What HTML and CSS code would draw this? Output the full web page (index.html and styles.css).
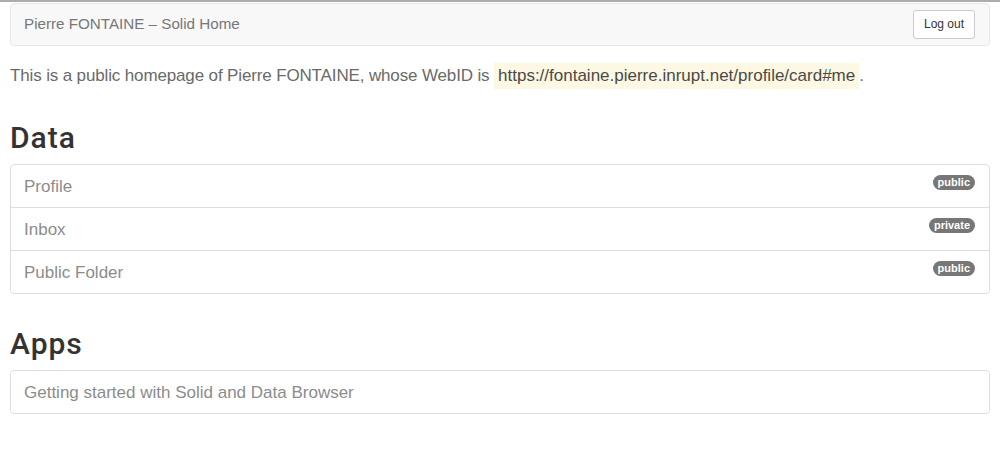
FILE: index.html
```html
<!DOCTYPE html>
<html>
<head>
<meta charset="utf-8">
<link rel="stylesheet" href="styles.css">
</head>
<body>
<div class="page">
  <nav class="navbar">
    <span class="brand">Pierre FONTAINE – Solid Home</span>
    <button class="btn">Log out</button>
  </nav>
  <p class="intro">This is a public homepage of Pierre FONTAINE, whose WebID is <span class="webid">https://fontaine.pierre.inrupt.net/profile/card#me</span>.</p>
  <h2 class="heading">Data</h2>
  <ul class="list">
    <li class="item"><span>Profile</span><span class="badge">public</span></li>
    <li class="item"><span>Inbox</span><span class="badge">private</span></li>
    <li class="item"><span>Public Folder</span><span class="badge">public</span></li>
  </ul>
  <h2 class="heading apps">Apps</h2>
  <ul class="list">
    <li class="item"><span>Getting started with Solid and Data Browser</span></li>
  </ul>
</div>
</body>
</html>
```
FILE: styles.css
```css
html {
  border-top: 2px solid #acacac;
}
body {
  margin: 0;
  font-family: "Liberation Sans", Arial, sans-serif;
  color: #333;
  background: #fff;
}
.page {
  padding: 1px 10px 0;
}
.navbar {
  display: flex;
  justify-content: space-between;
  align-items: center;
  height: 41px;
  padding: 0 14px 0 13px;
  background: #f8f8f8;
  border: 1px solid #e7e7e7;
  border-radius: 4px;
}
.brand {
  font-size: 15.2px;
  color: #777;
  padding-bottom: 3px;
}
.btn {
  font-family: inherit;
  font-size: 12px;
  color: #333;
  background: #fff;
  border: 1px solid #ccc;
  border-radius: 3px;
  height: 29px;
  padding: 0 10px;
  margin-bottom: 1px;
}
.intro {
  margin: 17px 0 0;
  font-size: 17px;
  line-height: 26px;
  color: #6a6a6a;
  letter-spacing: -0.14px;
}
.webid {
  background: #fcf8e3;
  color: #4a4a4a;
  padding: 0 4px;
  letter-spacing: 0;
  display: inline-block;
}
.heading {
  margin: 32px 0 10px;
  font-family: Roboto, "Liberation Sans", sans-serif;
  font-size: 30px;
  font-weight: 500;
  line-height: 33px;
  letter-spacing: 1px;
  color: #333;
}
.heading.apps {
  margin-top: 33px;
}
.list {
  list-style: none;
  margin: 0;
  padding: 0;
  border: 1px solid #ddd;
  border-radius: 4px;
}
.item {
  display: flex;
  justify-content: space-between;
  align-items: flex-start;
  height: 42px;
  padding: 0 14px 0 13px;
  box-sizing: border-box;
  font-size: 17px;
  line-height: 44px;
  color: #8c8c8c;
}
.item + .item {
  border-top: 1px solid #ddd;
  height: 43px;
}
.badge {
  margin-top: 10px;
  font-size: 11px;
  font-weight: bold;
  line-height: 15px;
  color: #fff;
  background: #777;
  border-radius: 8px;
  padding: 0 5px;
}
```
